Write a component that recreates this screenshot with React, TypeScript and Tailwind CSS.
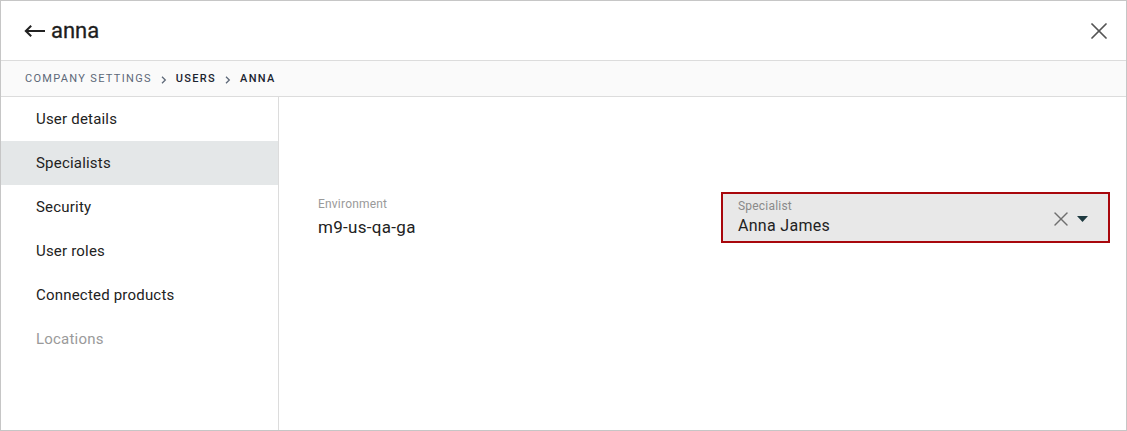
import { X } from 'lucide-react'

const navItems = [
  { label: 'User details' },
  { label: 'Specialists', active: true },
  { label: 'Security' },
  { label: 'User roles' },
  { label: 'Connected products' },
  { label: 'Locations', disabled: true },
]

function Chevron() {
  return (
    <svg width="6" height="8" viewBox="0 0 6 8" className="mx-[9px]">
      <path d="M1 0.8L4.3 4L1 7.2" fill="none" stroke="#5d6878" strokeWidth="1.3" />
    </svg>
  )
}

export default function App() {
  return (
    <div
      className="w-[1127px] h-[431px] border border-[#c6c6c6] bg-white flex flex-col text-[#222]"
      style={{ fontFamily: 'Roboto, "Noto Sans", sans-serif' }}
    >
      {/* Header */}
      <div className="h-[60px] shrink-0 flex items-center justify-between pl-[23px] pr-[13px] border-b border-[#dcdcdc]">
        <div className="flex items-center gap-[6px]">
          <svg width="21" height="12" viewBox="0 0 21 12" className="text-[#222]">
            <path d="M21 6H2M7.2 0.7L1.8 6l5.4 5.3" fill="none" stroke="currentColor" strokeWidth="2" />
          </svg>
          <h1 className="text-[22px] leading-none font-normal text-[#1e1e1e] [-webkit-text-stroke:0.3px_#1e1e1e]">anna</h1>
        </div>
        <X size={28} strokeWidth={1.5} className="text-[#555]" />
      </div>

      {/* Breadcrumb */}
      <div className="h-[36px] shrink-0 bg-[#fafafa] border-b border-[#dcdcdc] flex items-center pl-[24px] pt-[2px] text-[11px] tracking-[0.12em]">
        <span className="text-[#5d6878]">COMPANY SETTINGS</span>
        <Chevron />
        <span className="text-[#1c2430] font-medium">USERS</span>
        <Chevron />
        <span className="text-[#1c2430] font-medium">ANNA</span>
      </div>

      {/* Body */}
      <div className="flex flex-1 min-h-0">
        <nav className="w-[278px] shrink-0 border-r border-[#dcdcdc] flex flex-col">
          {navItems.map((item) => (
            <div
              key={item.label}
              className={`h-[44px] flex items-center pl-[35px] text-[15px] tracking-[0.2px] ${
                item.active ? 'bg-[#e4e7e8] text-[#222]' : item.disabled ? 'text-[#9a9a9a]' : 'text-[#222]'
              }`}
            >
              {item.label}
            </div>
          ))}
        </nav>

        <div className="flex-1 pt-[95px] pl-[39px] pr-[16px]">
          <div className="flex items-start">
            <div className="w-[403px] pt-[5px]">
              <div className="text-[12px] leading-[14px] text-[#9a9a9a] tracking-[0.2px]">Environment</div>
              <div className="text-[17px] leading-[20px] mt-[6px] text-[#222] tracking-[0.3px]">m9-us-qa-ga</div>
            </div>
            <div className="flex-1 h-[51px] border-2 border-[#a8070c] bg-[#e8e8e8] flex items-center pl-[15px] pr-[20px]">
              <div className="flex-1">
                <div className="text-[12px] leading-[14px] text-[#8a8a8a] tracking-[0.2px]">Specialist</div>
                <div className="text-[16px] leading-[20px] mt-[3px] text-[#222] tracking-[0.3px]">Anna James</div>
              </div>
              <div className="flex items-center gap-[4px] mt-[2px]">
                <X size={24} strokeWidth={1.4} className="text-[#6f6f6f]" />
                <svg width="11" height="6" viewBox="0 0 11 6">
                  <path d="M0 0h11L5.5 6z" fill="#1e3a40" />
                </svg>
              </div>
            </div>
          </div>
        </div>
      </div>
    </div>
  )
}
